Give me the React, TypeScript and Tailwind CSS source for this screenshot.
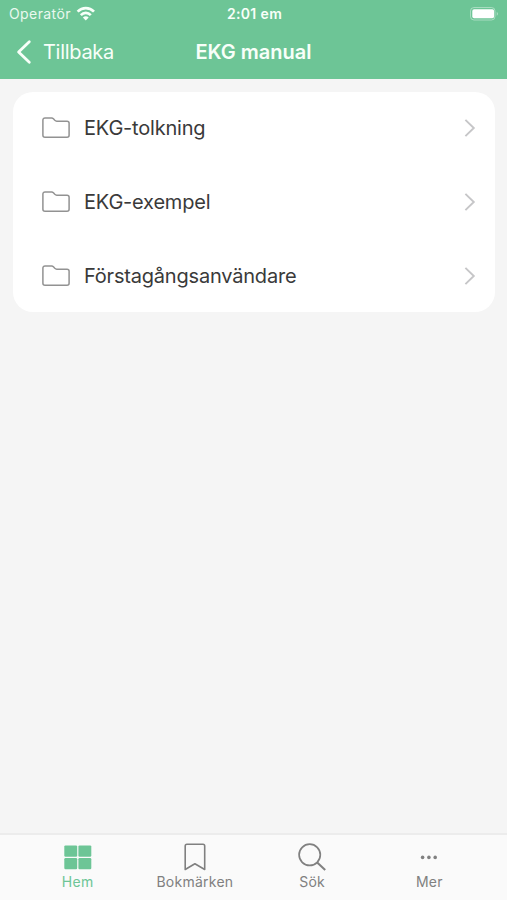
import type { ReactNode } from "react";

interface Folder {
  id: number;
  title: string;
}

interface Tab {
  label: string;
  icon: ReactNode;
  active?: boolean;
}

const folders: Folder[] = [
  { id: 1, title: "EKG-tolkning" },
  { id: 2, title: "EKG-exempel" },
  { id: 3, title: "Förstagångsanvändare" },
];

// ---------------- ICONS ----------------
const WifiIcon = () => (
  <svg width="20" height="16" viewBox="0 0 20 16" fill="none" stroke="currentColor" strokeWidth="2.7">
    <path d="M1.6 5.6C6.3 0.9 13.3 0.9 18 5.6" />
    <path d="M4.8 9.1C7.7 6.2 11.9 6.2 14.8 9.1" />
    <path d="M9.8 14.4L6.9 11.5C8.5 9.9 11.1 9.9 12.7 11.5Z" fill="currentColor" stroke="none" />
  </svg>
);

const BatteryIcon = () => (
  <svg width="31" height="15" viewBox="0 0 31 15" fill="none">
    <rect x="1.5" y="0.5" width="24.5" height="12.5" rx="3.5" stroke="#fff" strokeOpacity="0.4" />
    <rect x="3.3" y="2.3" width="21.8" height="9" rx="1.8" fill="#fff" />
    <path d="M27.7 4.7C29.5 5.7 29.5 7.8 27.7 8.8Z" fill="#fff" fillOpacity="0.4" />
  </svg>
);

const BackIcon = () => (
  <svg width="16" height="26" viewBox="0 0 16 26" fill="none" stroke="currentColor" strokeWidth="2.8" strokeLinecap="round" strokeLinejoin="round">
    <path d="M13.3 2.7L2.6 13L13.3 23.3" />
  </svg>
);

const FolderIcon = () => (
  <svg width="28" height="22" viewBox="0 0 28 22" fill="none" stroke="#929292" strokeWidth="1.5" strokeLinejoin="round">
    <path d="M0.9 3V18.2C0.9 19.4 1.8 20.2 3 20.2H25C26.2 20.2 27.1 19.4 27.1 18.2V6.3C27.1 5 26.2 4.2 25 4.2H14.7C13.9 4.2 13.4 3.9 12.8 3.3L11.4 1.8C10.9 1.3 10.5 1 9.7 1H3C1.8 1 0.9 1.8 0.9 3Z" />
  </svg>
);

const ChevronIcon = () => (
  <svg width="12" height="20" viewBox="0 0 12 20" fill="none" stroke="#c6c6c8" strokeWidth="1.9">
    <path d="M1.4 1.9L9.8 10L1.4 18.1" />
  </svg>
);

const HomeIcon = () => (
  <svg width="28" height="28" viewBox="0 0 28 28" fill="currentColor">
    <rect x="0.3" y="2.4" width="12.9" height="11.3" rx="1.2" />
    <rect x="14.4" y="2.4" width="12.9" height="11.3" rx="1.2" />
    <rect x="0.3" y="15" width="12.9" height="11.2" rx="1.2" />
    <rect x="14.4" y="15" width="12.9" height="11.2" rx="1.2" />
  </svg>
);

const BookmarkIcon = () => (
  <svg width="28" height="28" viewBox="0 0 28 28" fill="none" stroke="currentColor" strokeWidth="1.6" strokeLinejoin="round">
    <path d="M4.2 26.5V3C4.2 2 4.9 1.3 5.9 1.3H22C23 1.3 23.7 2 23.7 3V26.5L13.9 20.7Z" />
  </svg>
);

const SearchIcon = () => (
  <svg width="28" height="28" viewBox="0 0 28 28" fill="none" stroke="currentColor" strokeWidth="1.7">
    <circle cx="11.7" cy="11.8" r="10.6" />
    <path d="M19.2 19.4L27.2 26.9" strokeWidth="2.1" />
  </svg>
);

const MoreIcon = () => (
  <svg width="28" height="28" viewBox="0 0 28 28" fill="currentColor">
    <circle cx="7.6" cy="14.4" r="1.8" />
    <circle cx="13.9" cy="14.4" r="1.8" />
    <circle cx="20.2" cy="14.4" r="1.8" />
  </svg>
);

const tabs: Tab[] = [
  { label: "Hem", icon: <HomeIcon />, active: true },
  { label: "Bokmärken", icon: <BookmarkIcon /> },
  { label: "Sök", icon: <SearchIcon /> },
  { label: "Mer", icon: <MoreIcon /> },
];

export default function App() {
  return (
    <div className="flex h-screen w-full flex-col overflow-hidden bg-[#f5f5f5] font-['Inter','Liberation_Sans',sans-serif]">
      {/* ================= HEADER ================= */}
      <header className="h-[79.4px] shrink-0 bg-[#6dc596] text-[#f8fff9]">
        <div className="grid h-7 grid-cols-3 items-center pr-[7px] pl-[9px]">
          <div className="flex items-center gap-[5px] text-sm leading-4">
            <span className="tracking-[0.4px] opacity-90">Operatör</span>
            <WifiIcon />
          </div>
          <div className="text-center text-sm leading-4 font-semibold tracking-[0.35px]">
            2:01 em
          </div>
          <div className="flex justify-end">
            <BatteryIcon />
          </div>
        </div>
        <div className="grid h-12 grid-cols-3 items-center pr-4 pl-4">
          <button type="button" className="flex items-center gap-[11px] text-xl leading-6">
            <BackIcon />
            <span className="tracking-[-0.3px]">Tillbaka</span>
          </button>
          <h1 className="text-center text-xl leading-6 font-semibold whitespace-nowrap">
            EKG manual
          </h1>
        </div>
      </header>

      {/* ================= LIST ================= */}
      <main className="flex-1 pt-[12.6px] pr-3 pl-[13px]">
        <ul className="flex h-[220px] flex-col rounded-[20px] bg-white">
          {folders.map((folder) => (
            <li key={folder.id} className="flex h-[73.6px] shrink-0 items-center pr-[19px] pb-[0.8px] pl-[29px]">
              <FolderIcon />
              <span className="ml-3.5 flex-1 text-xl leading-6 tracking-[-0.2px] text-[#3a3a3a]">
                {folder.title}
              </span>
              <ChevronIcon />
            </li>
          ))}
        </ul>
      </main>

      {/* ================= TAB BAR ================= */}
      <nav className="grid h-[67px] shrink-0 grid-cols-4 border-t-2 border-[#ececec] bg-[#fafafa] px-[19px] pt-2">
        {tabs.map((tab) => (
          <div
            key={tab.label}
            className={`flex flex-col items-center ${tab.active ? "text-[#6dc596]" : "text-[#808080]"}`}
          >
            {tab.icon}
            <span className="mt-px text-sm leading-5 tracking-[0.25px]">{tab.label}</span>
          </div>
        ))}
      </nav>
    </div>
  );
}
